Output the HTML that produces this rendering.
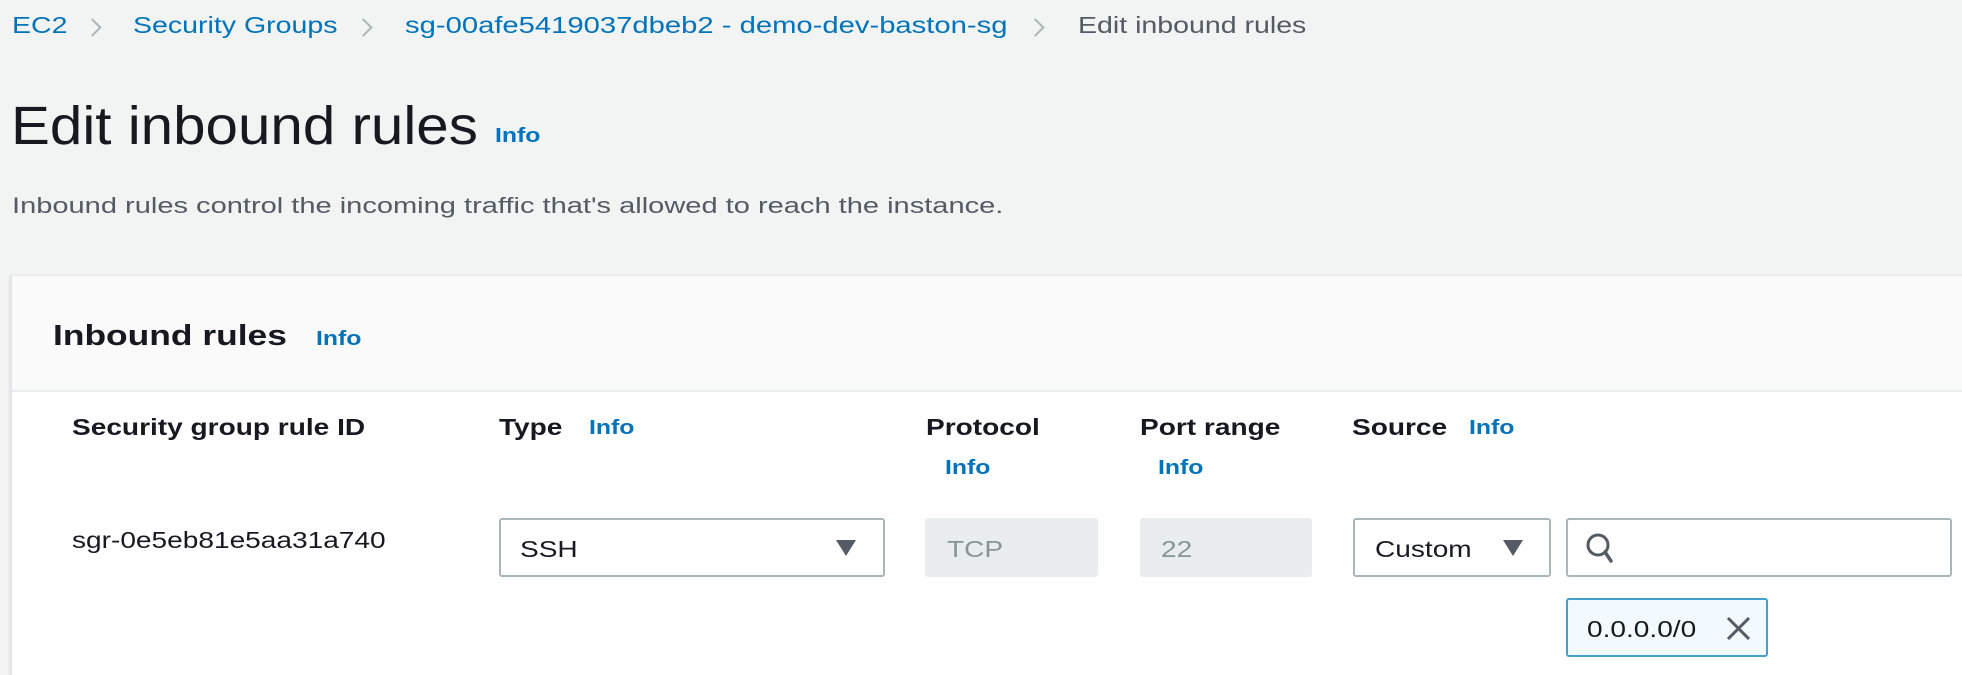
<!DOCTYPE html>
<html><head><meta charset="utf-8"><style>
*{margin:0;padding:0;box-sizing:border-box}
body{width:1962px;height:668px;background:#f2f3f3;font-family:"Liberation Sans",sans-serif;position:relative;overflow:hidden;color:#16191f}
.a{position:absolute;white-space:nowrap;transform-origin:left center;transform:scaleX(1.22)}
.bc{font-size:23px;color:#0073bb;top:12px;transform:scaleX(1.24)}
.chev{position:absolute;width:13px;height:13px;border-right:2.5px solid #aab7b8;border-top:2.5px solid #aab7b8;transform:rotate(45deg);top:21px}
.info{color:#0073bb;font-weight:bold;font-size:20px;transform:scaleX(1.24)}
.th{font-weight:bold;font-size:23px;top:414px}
.box{position:absolute;border:2px solid #aab7b8;border-radius:3px;background:#fff}
.dis{position:absolute;background:#eaeded;border-radius:3px}
.tri{position:absolute;width:0;height:0;border-left:10px solid transparent;border-right:10px solid transparent;border-top:16px solid #545b64}
svg.a{transform:none}
</style></head><body>
<div class="a bc" style="left:12px">EC2</div>
<div class="chev" style="left:86px"></div>
<div class="a bc" style="left:133px">Security Groups</div>
<div class="chev" style="left:357px"></div>
<div class="a bc" style="left:405px;transform:scaleX(1.27)">sg-00afe5419037dbeb2 - demo-dev-baston-sg</div>
<div class="chev" style="left:1029px"></div>
<div class="a bc" style="left:1078px;color:#545b64">Edit inbound rules</div>

<div class="a" style="left:11px;top:95px;font-size:54px;color:#16191f;transform:scaleX(1.08)">Edit inbound rules</div>
<div class="a info" style="left:495px;top:125px">Info</div>
<div class="a" style="left:12px;top:193px;font-size:22px;color:#545b64;transform:scaleX(1.32)">Inbound rules control the incoming traffic that's allowed to reach the instance.</div>

<div style="position:absolute;left:10px;top:275px;width:1960px;height:400px;background:#fff;border-left:2px solid #e3e6e6;border-top:1px solid #e8eaea;box-shadow:0 1px 2px rgba(0,0,0,.15)"></div>
<div style="position:absolute;left:12px;top:276px;width:1950px;height:116px;background:#fafafa;border-bottom:2px solid #eaeded"></div>
<div class="a" style="left:53px;top:320px;font-size:29px;font-weight:bold">Inbound rules</div>
<div class="a info" style="left:316px;top:328px">Info</div>

<div class="a th" style="left:72px">Security group rule ID</div>
<div class="a th" style="left:499px">Type</div>
<div class="a info" style="left:589px;top:417px">Info</div>
<div class="a th" style="left:926px">Protocol</div>
<div class="a info" style="left:945px;top:457px">Info</div>
<div class="a th" style="left:1140px">Port range</div>
<div class="a info" style="left:1158px;top:457px">Info</div>
<div class="a th" style="left:1352px">Source</div>
<div class="a info" style="left:1469px;top:417px">Info</div>

<div class="a" style="left:72px;top:527px;font-size:23px">sgr-0e5eb81e5aa31a740</div>
<div class="box" style="left:499px;top:518px;width:386px;height:59px"></div>
<div class="a" style="left:520px;top:536px;font-size:23px">SSH</div>
<div class="tri" style="left:836px;top:540px"></div>
<div class="dis" style="left:925px;top:518px;width:173px;height:59px"></div>
<div class="a" style="left:947px;top:536px;font-size:23px;color:#879596">TCP</div>
<div class="dis" style="left:1140px;top:518px;width:172px;height:59px"></div>
<div class="a" style="left:1161px;top:536px;font-size:23px;color:#879596">22</div>
<div class="box" style="left:1353px;top:518px;width:198px;height:59px"></div>
<div class="a" style="left:1375px;top:536px;font-size:23px">Custom</div>
<div class="tri" style="left:1503px;top:540px"></div>
<div class="box" style="left:1566px;top:518px;width:386px;height:59px"></div>
<svg class="a" style="left:1584px;top:531px" width="34" height="36" viewBox="0 0 34 36"><circle cx="14" cy="14" r="10" fill="none" stroke="#545b64" stroke-width="3"/><path d="M21 21L27 30" stroke="#545b64" stroke-width="3.5" stroke-linecap="round"/></svg>
<div style="position:absolute;left:1566px;top:598px;width:202px;height:59px;background:#f1faff;border:2px solid #44a0c9;border-radius:3px"></div>
<div class="a" style="left:1587px;top:616px;font-size:23px">0.0.0.0/0</div>
<svg class="a" style="left:1725px;top:615px" width="27" height="27" viewBox="0 0 27 27"><path d="M3 3L24 24M24 3L3 24" stroke="#545b64" stroke-width="3"/></svg>
</body></html>
